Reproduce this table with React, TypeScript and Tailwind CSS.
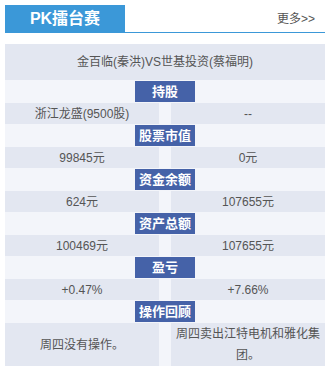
import React from "react";

const font = { fontFamily: '"Liberation Sans", "Noto Sans CJK SC", sans-serif' };

const sections: { title: string; left: string; right: string }[] = [
  { title: "持股", left: "浙江龙盛(9500股)", right: "--" },
  { title: "股票市值", left: "99845元", right: "0元" },
  { title: "资金余额", left: "624元", right: "107655元" },
  { title: "资产总额", left: "100469元", right: "107655元" },
  { title: "盈亏", left: "+0.47%", right: "+7.66%" },
];

function Head({ title }: { title: string }) {
  return (
    <div className="pt-px flex justify-center">
      <div className="w-[60px] h-[21px] bg-[#4562a8] text-white font-bold text-[13px] flex items-center justify-center leading-none">
        {title}
      </div>
    </div>
  );
}

export default function App() {
  return (
    <div className="w-[326px] h-[366px] bg-white overflow-hidden pl-[5px] pr-px pt-[5px]" style={font}>
      <div className="flex items-center justify-between h-[28px] border-b border-[#3b98d8]">
        <div className="w-[120px] h-full bg-[#3b98d8] text-white font-bold text-[16px] flex items-center justify-center">
          PK擂台赛
        </div>
        <div className="pr-[10px] text-[12px] text-[#555] leading-none">更多&gt;&gt;</div>
      </div>
      <div className="mt-[11px] bg-[#f3f5fa] text-[12px] text-[#555]">
        <div className="h-[36px] bg-[#e3e7f1] flex items-center justify-center">
          金百临(秦洪)VS世基投资(蔡福明)
        </div>
        {sections.map((s) => (
          <div key={s.title}>
            <Head title={s.title} />
            <div className="mt-px grid grid-cols-2 gap-x-3">
              <div className="h-[21px] bg-[#e3e7f1] flex items-center justify-center">{s.left}</div>
              <div className="h-[21px] bg-[#e3e7f1] flex items-center justify-center">{s.right}</div>
            </div>
          </div>
        ))}
        <Head title="操作回顾" />
        <div className="mt-px grid grid-cols-2 gap-x-3">
          <div className="bg-[#e3e7f1] flex items-center justify-center px-1 leading-[21px] text-center">
            周四没有操作。
          </div>
          <div className="bg-[#e3e7f1] flex items-center justify-center px-1 py-px leading-[21px] text-center">
            周四卖出江特电机和雅化集团。
          </div>
        </div>
      </div>
    </div>
  );
}
